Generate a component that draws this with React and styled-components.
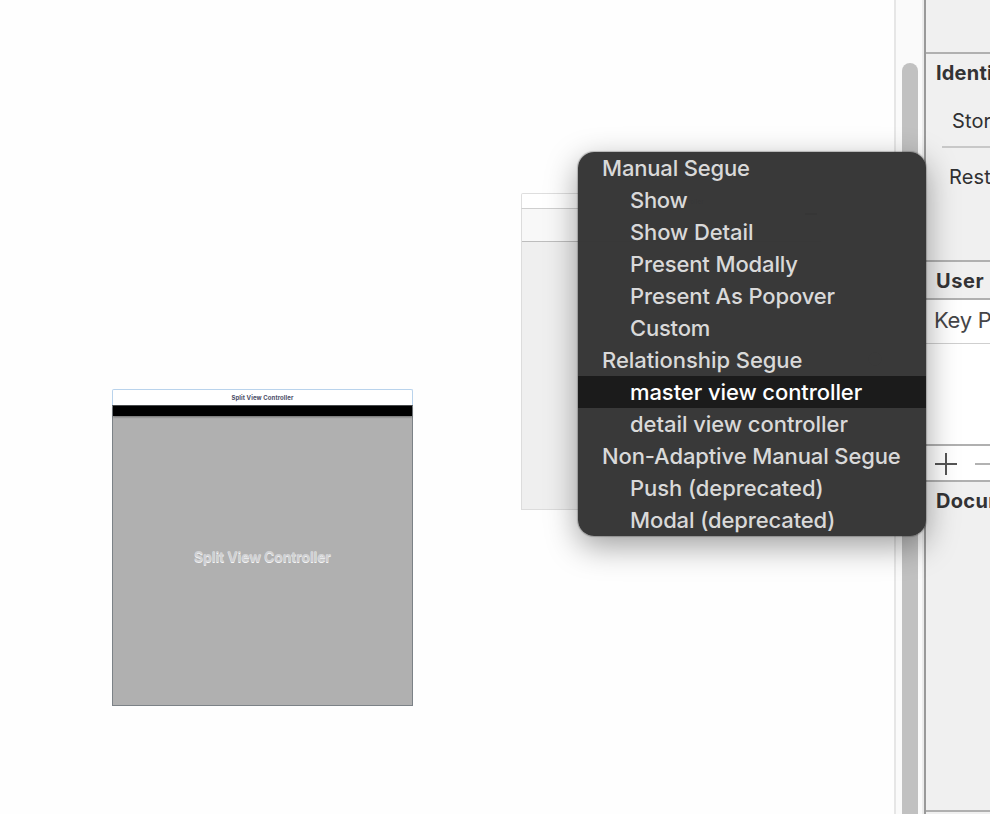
import React from "react";
import styled, { createGlobalStyle } from "styled-components";

const GlobalStyle = createGlobalStyle`
  body { margin: 0; overflow: hidden; background: #fff; }
  * { box-sizing: border-box; }
`;

const Workspace = styled.div`
  position: relative;
  display: flex;
  width: 990px;
  height: 814px;
  overflow: hidden;
  background: #fefefe;
  font-family: Inter, "Liberation Sans", sans-serif;
  white-space: nowrap;
`;

const Canvas = styled.main`
  position: relative;
  flex: 1;
`;

const Scene = styled.section`
  position: absolute;
  left: ${(p) => p.$x}px;
  top: ${(p) => p.$y}px;
  width: ${(p) => p.$w}px;
  height: 317px;
  display: flex;
  flex-direction: column;
`;

const SceneTitle = styled.header`
  height: ${(p) => (p.$active ? 16 : 15)}px;
  flex: none;
  display: flex;
  align-items: center;
  justify-content: center;
  border: 1px solid ${(p) => (p.$active ? "#b9d3ec" : "#dedede")};
  border-bottom: 0;
  border-radius: 2px 2px 0 0;
  background: #fff;
  color: #4a4d66;
  font-size: 6px;
  font-weight: 700;
  letter-spacing: 0.1px;
`;

const SplitBody = styled.div`
  flex: 1;
  display: flex;
  flex-direction: column;
  border: 1px solid #7c8287;
  border-top-color: #4b4e50;
  background: #b0b0b0;
`;

const StatusStrip = styled.div`
  height: 10px;
  background: #000;
  box-shadow: 0 1px 2px rgba(0, 0, 0, 0.4);
`;

const SceneLabel = styled.div`
  flex: 1;
  display: flex;
  align-items: center;
  justify-content: center;
  padding-bottom: 9px;
  color: #d0d1d3;
  font-size: 14px;
  font-weight: 700;
  letter-spacing: -0.15px;
  text-shadow: 0 1px 0 #f4f4f5;
`;

const PlainBody = styled.div`
  flex: 1;
  border: 1px solid #dcdcdc;
  border-top-color: #cfcfcf;
  background: #efefef;
`;

const NavBar = styled.div`
  height: 33px;
  display: flex;
  justify-content: flex-end;
  padding: 4px 4px 0 0;
  border-bottom: 1px solid #bdbdbd;
  background: #f8f8f8;
`;

const Battery = styled.div`
  width: 12px;
  height: 2px;
  background: #222;
`;

const SegueLine = styled.svg`
  position: absolute;
  left: 822px;
  top: 350px;
`;

const ScrollTrack = styled.div`
  width: 30px;
  display: flex;
  justify-content: flex-end;
  padding: 63px 4px 0 0;
  border-left: 2px solid #e6e6e6;
  border-right: 2px solid #ececec;
  background: #fafafa;
`;

const ScrollThumb = styled.div`
  width: 16px;
  border-radius: 8px 8px 0 0;
  background: #c1c1c1;
`;

const Inspector = styled.aside`
  width: 66px;
  display: flex;
  flex-direction: column;
  overflow: hidden;
  border-left: 2px solid #999;
  background: #f0f0f0;
`;

const Block = styled.div`
  flex: none;
  height: ${(p) => p.$h}px;
  border-bottom: ${(p) => (p.$thin ? "1px solid #cfcfcf" : "2px solid #b0b0b0")};
  background: ${(p) => (p.$white ? "#fff" : "#f0f0f0")};
`;

const Heading = styled.div`
  height: 38px;
  padding-left: 10px;
  color: #333335;
  font-size: 20px;
  font-weight: 700;
  line-height: 38px;
  letter-spacing: ${(p) => p.$track || 0}px;
`;

const Field = styled.div`
  height: ${(p) => p.$h}px;
  padding-top: ${(p) => p.$drop || 0}px;
  padding-left: ${(p) => p.$indent}px;
  color: #303032;
  font-size: 20px;
  line-height: ${(p) => p.$h - (p.$drop || 0)}px;
  letter-spacing: 0.15px;
`;

const Divider = styled.div`
  height: 2px;
  margin-left: 16px;
  background: #c8c8c8;
`;

const ColumnHead = styled.div`
  padding-left: 8px;
  color: #454547;
  font-size: 22px;
  line-height: 40px;
  letter-spacing: -0.3px;
`;

const TableTools = styled.svg`
  display: block;
`;

const Menu = styled.nav`
  position: absolute;
  left: 578px;
  top: 152px;
  width: 348px;
  height: 384px;
  overflow: hidden;
  border-radius: 16px;
  background: rgba(55, 55, 55, 0.988);
`;

const MenuShadow = styled.div`
  position: absolute;
  left: 578px;
  top: 152px;
  width: 348px;
  height: 384px;
  border-radius: 16px;
  box-shadow: 0 0 1px 1px rgba(0, 0, 0, 0.22), 0 10px 32px rgba(0, 0, 0, 0.38);
`;

const MenuRow = styled.div`
  height: 32px;
  padding-left: ${(p) => (p.$group ? 24 : 52)}px;
  background: ${(p) => (p.$selected ? "#1b1b1b" : "transparent")};
  color: ${(p) => (p.$selected ? "#fff" : "#d9d9d9")};
  font-size: 22px;
  font-weight: ${(p) => (p.$selected ? 500 : 450)};
  line-height: 33px;
  letter-spacing: ${(p) => p.$track ?? -0.1}px;
`;

const items = [
  { label: "Manual Segue", group: true, track: -0.18 },
  { label: "Show", track: -0.3 },
  { label: "Show Detail" },
  { label: "Present Modally", track: -0.13 },
  { label: "Present As Popover", track: -0.12 },
  { label: "Custom", track: -0.2 },
  { label: "Relationship Segue", group: true, track: -0.06 },
  { label: "master view controller", selected: true, track: -0.08 },
  { label: "detail view controller", track: -0.05 },
  { label: "Non-Adaptive Manual Segue", group: true, track: -0.12 },
  { label: "Push (deprecated)", track: -0.07 },
  { label: "Modal (deprecated)", track: -0.12 },
];

export default function App() {
  return (
    <>
      <GlobalStyle />
      <Workspace>
        <Canvas>
          <Scene $x={112} $y={389} $w={301}>
            <SceneTitle $active>Split View Controller</SceneTitle>
            <SplitBody>
              <StatusStrip />
              <SceneLabel>Split View Controller</SceneLabel>
            </SplitBody>
          </Scene>
          <Scene $x={521} $y={193} $w={301}>
            <SceneTitle>Navigation Controller</SceneTitle>
            <PlainBody>
              <NavBar>
                <Battery />
              </NavBar>
            </PlainBody>
          </Scene>
          <SegueLine width="64" height="18" fill="none" stroke="#999">
            <path d="M0 9H46" />
            <circle cx="53" cy="9" r="6.5" />
          </SegueLine>
        </Canvas>
        <ScrollTrack>
          <ScrollThumb />
        </ScrollTrack>
        <Inspector>
          <Block $h={54} />
          <Block $h={208}>
            <Heading $track={0.2}>Identity</Heading>
            <Field $h={54} $indent={26} $drop={4}>Storyboard ID</Field>
            <Divider />
            <Field $h={58} $indent={23}>Restoration ID</Field>
          </Block>
          <Block $h={38}>
            <Heading $track={0.6}>User Defined</Heading>
          </Block>
          <Block $h={44} $white $thin>
            <ColumnHead>Key Path</ColumnHead>
          </Block>
          <Block $h={102} $white />
          <Block $h={36} $white>
            <TableTools width="64" height="34" fill="none" strokeWidth="2">
              <path d="M9 18H31M20 7V29" stroke="#555" />
              <path d="M49 18H71" stroke="#b2b2b2" />
            </TableTools>
          </Block>
          <Block $h={330}>
            <Heading $track={0.3}>Document</Heading>
          </Block>
        </Inspector>
        <MenuShadow />
        <Menu>
          {items.map((item) => (
            <MenuRow
              key={item.label}
              $group={item.group}
              $selected={item.selected}
              $track={item.track}
            >
              {item.label}
            </MenuRow>
          ))}
        </Menu>
      </Workspace>
    </>
  );
}
